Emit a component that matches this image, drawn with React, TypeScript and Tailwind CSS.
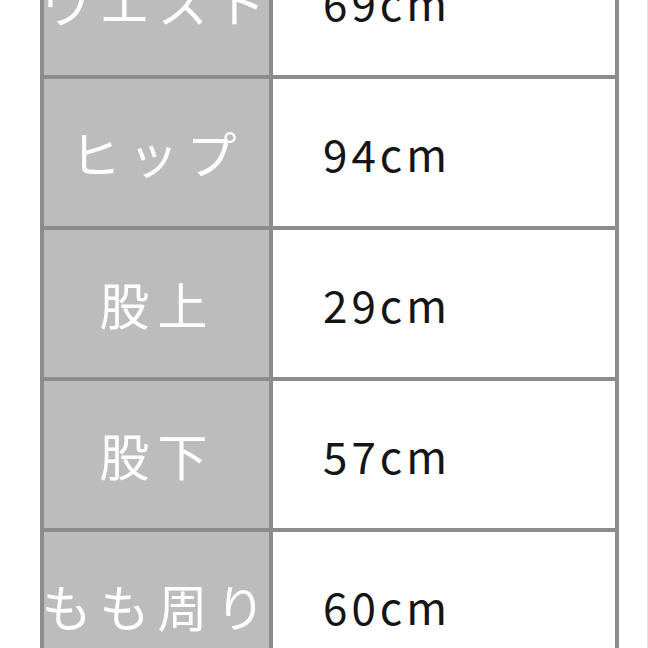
import React from "react";

const rows = [
  { label: "ウエスト", value: "69cm" },
  { label: "ヒップ", value: "94cm" },
  { label: "股上", value: "29cm" },
  { label: "股下", value: "57cm" },
  { label: "もも周り", value: "60cm" },
];

export default function App() {
  return (
    <div
      className="relative w-[648px] h-[648px] overflow-hidden bg-white"
      style={{ fontFamily: '"Noto Sans CJK JP", "Noto Sans", sans-serif' }}
    >
      <div className="absolute right-0 top-0 h-full w-px bg-[#e4e4e4]" />
      <div className="ml-[40px] mt-[-76px] w-[579px] grid grid-cols-[225px_342px] auto-rows-[147px] gap-[4px] p-[4px] bg-[#8c8c8c]">
        {rows.map((r) => (
          <React.Fragment key={r.label}>
            <div className="bg-[#bcbcbc] flex items-center justify-center whitespace-nowrap text-white text-[50px] tracking-[8px] pl-[2px]">
              {r.label}
            </div>
            <div className="bg-white flex items-center pl-[50px] text-[#151515] text-[44px] tracking-[4px]">
              {r.value}
            </div>
          </React.Fragment>
        ))}
      </div>
    </div>
  );
}
